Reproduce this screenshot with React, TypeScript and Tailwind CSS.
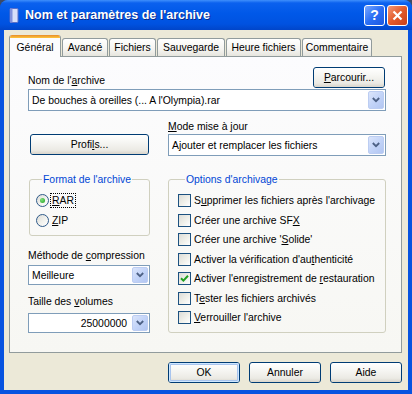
import React from 'react';

const U = ({ children }: { children: React.ReactNode }) => (
  <span className="underline decoration-1 underline-offset-[1px]">{children}</span>
);

const Chevron = () => (
  <svg width="8" height="6" viewBox="0 0 8 6">
    <path d="M0.8 1 L4 4.2 L7.2 1" stroke="#4d6185" strokeWidth="1.8" fill="none" />
  </svg>
);

const XpButton = ({
  children,
  className = '',
  isDefault = false,
}: {
  children: React.ReactNode;
  className?: string;
  isDefault?: boolean;
}) => (
  <div
    className={`rounded-[3px] border border-[#003c74] bg-[linear-gradient(180deg,#ffffff_0%,#f7f7f4_35%,#ebeae4_80%,#d8d4cb_100%)] ${className}`}
  >
    <div
      className={`flex h-full w-full items-center justify-center rounded-[2px] ${
        isDefault
          ? 'shadow-[inset_0_0_0_1px_#cee7ff,inset_0_0_0_2px_#a8c4ee]'
          : 'shadow-[inset_0_-1px_0_#dcd8cf]'
      }`}
    >
      {children}
    </div>
  </div>
);

const Combo = ({
  children,
  className = '',
  right = false,
}: {
  children: React.ReactNode;
  className?: string;
  right?: boolean;
}) => (
  <div className={`flex border border-[#7f9db9] bg-white ${className}`}>
    <div className={`flex flex-1 items-center px-[3px] ${right ? 'justify-end pr-[4px]' : ''}`}>{children}</div>
    <div className="m-px flex w-[16px] items-center justify-center rounded-[2px] border border-[#bccdf2] bg-[linear-gradient(135deg,#dbe5fb_0%,#c3d4f8_50%,#b2c6f2_100%)]">
      <Chevron />
    </div>
  </div>
);

const Checkbox = ({ label, checked = false }: { label: React.ReactNode; checked?: boolean }) => (
  <div className="flex h-[19.5px] items-center">
    <div className="flex h-[13px] w-[13px] items-center justify-center border border-[#1c5180] bg-[linear-gradient(135deg,#dcdcd7_0%,#f0f0ea_55%,#ffffff_100%)]">
      {checked && (
        <svg width="9" height="9" viewBox="0 0 9 9">
          <path d="M1 4.2 L3.4 6.6 L8 1.8" stroke="#21a121" strokeWidth="2" fill="none" />
        </svg>
      )}
    </div>
    <span className="ml-[3px]">{label}</span>
  </div>
);

const Radio = ({ label, checked = false, focused = false }: { label: React.ReactNode; checked?: boolean; focused?: boolean }) => (
  <div className="flex h-[20px] items-center">
    <div className="flex h-[13px] w-[13px] items-center justify-center rounded-full border border-[#2f5a8a] bg-[linear-gradient(135deg,#dcdcd7_0%,#f2f2ee_55%,#ffffff_100%)]">
      {checked && <div className="h-[5px] w-[5px] rounded-full bg-[radial-gradient(circle_at_35%_35%,#7ee07b,#21a121)]" />}
    </div>
    <span className={`ml-[2px] px-[1px] leading-[13px] ${focused ? 'outline outline-1 outline-dotted outline-black' : ''}`}>{label}</span>
  </div>
);

const tabs = [
  { name: 'Avancé', w: 'w-[46px]' },
  { name: 'Fichiers', w: 'w-[47px]' },
  { name: 'Sauvegarde', w: 'w-[68px]' },
  { name: 'Heure fichiers', w: 'w-[75px]' },
  { name: 'Commentaire', w: 'w-[70px]' },
];

export default function App() {
  return (
    <div className="h-[394px] w-[412px] bg-[#3c4a66]">
      <div className="flex h-full w-full flex-col overflow-hidden rounded-t-[8px] bg-[#0753e0] font-['Liberation_Sans',Arial,sans-serif] text-[10.4px] leading-[13px] text-black">
        {/* Title bar */}
        <div className="flex h-[30px] shrink-0 items-center bg-[linear-gradient(180deg,#3f8ffc_0%,#0b61ee_10%,#0058e8_45%,#0052e0_80%,#0145c9_100%)] pl-[9px] pr-[4px]">
          <svg width="10" height="15" viewBox="0 0 10 15">
            <rect x="1" y="0.5" width="8" height="14" rx="1" fill="#d7defa" stroke="#5a6fc8" />
            <rect x="1" y="0.5" width="2.5" height="14" fill="#7f8fdc" />
          </svg>
          <span className="ml-[6px] text-[12.5px] font-bold text-white [text-shadow:1px_1px_0_#0a2a8a]">
            Nom et paramètres de l'archive
          </span>
          <div className="ml-auto flex gap-[2px]">
            <div className="flex h-[21px] w-[21px] items-center justify-center rounded-[3px] border border-white bg-[linear-gradient(135deg,#7aa8ff_0%,#2a6ef5_50%,#1c58e0_100%)] text-[14px] font-bold text-white">
              ?
            </div>
            <div className="flex h-[21px] w-[21px] items-center justify-center rounded-[3px] border border-white bg-[linear-gradient(135deg,#f29877_0%,#e35a2a_50%,#c8401a_100%)]">
              <svg width="11" height="11" viewBox="0 0 11 11">
                <path d="M1.5 1.5 L9.5 9.5 M9.5 1.5 L1.5 9.5" stroke="white" strokeWidth="2.2" />
              </svg>
            </div>
          </div>
        </div>

        {/* Client area */}
        <div className="mx-[4px] mb-[4px] flex flex-1 flex-col bg-[#ece9d8] pl-[5px] pr-[6px] pt-[5px]">
          {/* Tabs */}
          <div className="relative z-10 flex h-[21px] items-end">
            <div className="-mb-px flex h-[22px] w-[52px] flex-col overflow-hidden rounded-t-[3px] border-x border-[#919b9c] bg-[#fcfcfe]">
              <div className="h-[3px] shrink-0 bg-[linear-gradient(180deg,#e68b2c,#ffc73c)]" />
              <div className="flex flex-1 items-center justify-center">Général</div>
            </div>
            {tabs.map((t) => (
              <div
                key={t.name}
                className={`ml-[1px] flex h-[18px] items-center justify-center rounded-t-[3px] border-x border-t border-[#919b9c] bg-[linear-gradient(180deg,#ffffff_0%,#f5f4f0_60%,#e6e5de_100%)] ${t.w}`}
              >
                {t.name}
              </div>
            ))}
          </div>

          {/* Panel */}
          <div className="flex h-[297px] flex-col border border-[#919b9c] bg-[linear-gradient(180deg,#fcfcfe_0%,#f7f7f3_100%)] pl-[18px] pr-[15px] pt-[10px]">
            <div className="flex h-[21px] items-end justify-between">
              <span className="pb-[1px]">
                Nom de l'<U>a</U>rchive
              </span>
              <XpButton className="mr-px h-[21px] w-[72px]">
                <span>
                  <U>P</U>arcourir...
                </span>
              </XpButton>
            </div>
            <Combo className="mt-[1px] h-[22px]">De bouches à oreilles (... A l'Olympia).rar</Combo>

            <div className="mt-[9px] grid grid-cols-[122px_218px] gap-x-[18px]">
              <div className="pt-[14px]">
                <XpButton className="ml-[2px] h-[21px] w-[119px]">
                  <span>
                    Profi<U>l</U>s...
                  </span>
                </XpButton>
              </div>
              <div>
                <div className="h-[13px]">
                  <U>M</U>ode mise à jour
                </div>
                <Combo className="mt-[1px] h-[22px]">Ajouter et remplacer les fichiers</Combo>
              </div>
            </div>

            <div className="mt-[17px] grid grid-cols-[122px_218px] gap-x-[18px]">
              <div className="flex flex-col">
                <fieldset className="ml-px rounded-[3px] border border-[#d0d0bf] pb-[5px] pl-[6px] pt-[4px]">
                  <legend className="ml-[6px] px-[1px] text-[#0046d5]">Format de l'archive</legend>
                  <Radio label={<><U>R</U>AR</>} checked focused />
                  <Radio label={<><U>Z</U>IP</>} />
                </fieldset>
                <div className="mt-[13px]">
                  Méthode de <U>c</U>ompression
                </div>
                <Combo className="mt-[3px] h-[20px]">Meilleure</Combo>
                <div className="mt-[10px]">
                  Taille des <U>v</U>olumes
                </div>
                <Combo className="mt-[5px] h-[20px]" right>
                  25000000
                </Combo>
              </div>
              <fieldset className="rounded-[3px] border border-[#d0d0bf] pb-[4px] pl-[9px] pt-[5px]">
                <legend className="ml-[7px] px-[1px] text-[#0046d5]">Options d'archivage</legend>
                <Checkbox label={<>S<U>u</U>pprimer les fichiers après l'archivage</>} />
                <Checkbox label={<>Créer une archive SF<U>X</U></>} />
                <Checkbox label={<>Créer une archive '<U>S</U>olide'</>} />
                <Checkbox label={<>Activer la vérification d'au<U>t</U>henticité</>} />
                <Checkbox label={<>Activer l'enregistrement de <U>r</U>estauration</>} checked />
                <Checkbox label={<>T<U>e</U>ster les fichiers archivés</>} />
                <Checkbox label={<><U>V</U>errouiller l'archive</>} />
              </fieldset>
            </div>
          </div>

          {/* Bottom buttons */}
          <div className="mt-[9px] flex justify-end gap-[9px]">
            <XpButton className="h-[21px] w-[72px]" isDefault>
              OK
            </XpButton>
            <XpButton className="h-[21px] w-[72px]">Annuler</XpButton>
            <XpButton className="h-[21px] w-[72px]">Aide</XpButton>
          </div>
        </div>
      </div>
    </div>
  );
}
